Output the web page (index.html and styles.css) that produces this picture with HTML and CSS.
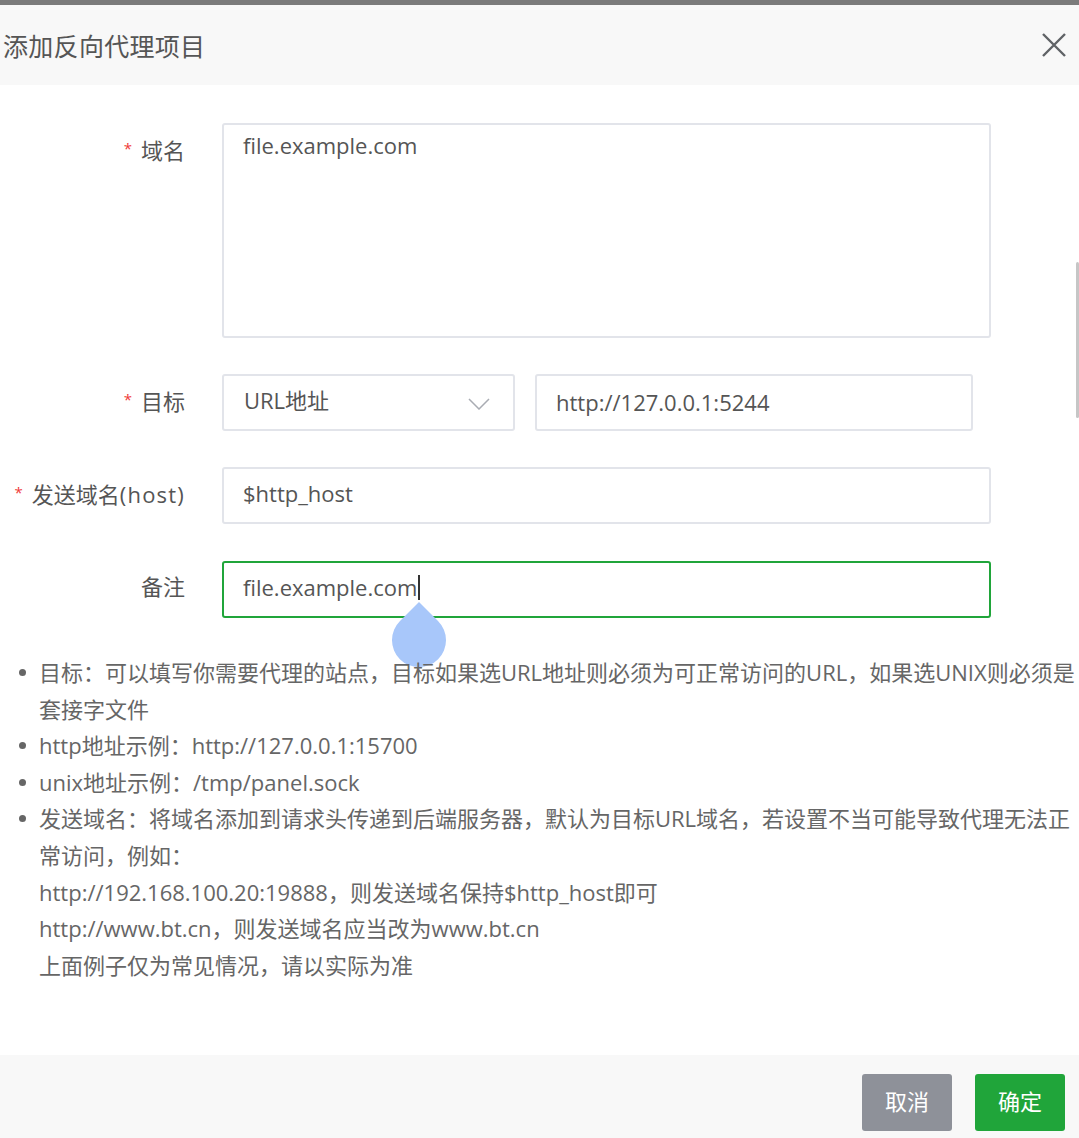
FILE: index.html
```html
<!DOCTYPE html>
<html lang="zh-CN">
<head>
<meta charset="utf-8">
<title>添加反向代理项目</title>
<link rel="stylesheet" href="styles.css">
</head>
<body>
<div class="page">
  <div class="topbar"></div>
  <header class="head">
    <h1 class="title">添加反向代理项目</h1>
    <button class="close" type="button" aria-label="关闭">
      <svg width="26" height="26" viewBox="0 0 26 26"><path d="M2 2 L24 24 M24 2 L2 24" stroke="#5f6266" stroke-width="2.4" fill="none" stroke-linecap="butt"/></svg>
    </button>
  </header>
  <main class="content">
    <div class="form">
      <div class="row">
        <div class="lbl"><span class="req">*</span>域名</div>
        <div class="ctrl"><div class="textarea">file.example.com</div></div>
      </div>
      <div class="row">
        <div class="lbl"><span class="req">*</span>目标</div>
        <div class="ctrl split">
          <div class="select"><span>URL地址</span>
            <svg class="chev" width="22" height="12" viewBox="0 0 22 12"><path d="M1 1 L11 11 L21 1" stroke="#a9acb3" stroke-width="1.5" fill="none"/></svg>
          </div>
          <div class="input url">http://127.0.0.1:5244</div>
        </div>
      </div>
      <div class="row">
        <div class="lbl"><span class="req">*</span>发送域名<span class="host">(host)</span></div>
        <div class="ctrl"><div class="input">$http_host</div></div>
      </div>
      <div class="row">
        <div class="lbl">备注</div>
        <div class="ctrl"><div class="input focus"><span class="val">file.example.com<span class="caret"></span><svg class="handle" width="56" height="68" viewBox="0 0 56 68"><path d="M28 0 L47 19 A27 27 0 1 1 9 19 Z" fill="#a8c7fa"/></svg></span></div></div>
      </div>
    </div>
    <ul class="notes">
      <li>目标：可以填写你需要代理的站点，目标如果选URL地址则必须为可正常访问的URL，如果选UNIX则必须是套接字文件</li>
      <li>http地址示例：http://127.0.0.1:15700</li>
      <li>unix地址示例：/tmp/panel.sock</li>
      <li>发送域名：将域名添加到请求头传递到后端服务器，默认为目标URL域名，若设置不当可能导致代理无法正常访问，例如：<br>http://192.168.100.20:19888，则发送域名保持$http_host即可<br>http://www.bt.cn，则发送域名应当改为www.bt.cn<br>上面例子仅为常见情况，请以实际为准</li>
    </ul>
  </main>
  <footer class="foot">
    <button class="btn cancel" type="button">取消</button>
    <button class="btn ok" type="button">确定</button>
  </footer>
  <div class="scrollbar"></div>
</div>
</body>
</html>
```

FILE: styles.css
```css
*, *::before, *::after {
  box-sizing: border-box;
}
html, body {
  margin: 0;
  padding: 0;
  background: #ffffff;
}
body {
  font-family: "Open Sans", "Noto Sans CJK SC", sans-serif;
  color: #555;
}
.page {
  position: relative;
  width: 1079px;
  height: 1138px;
  display: flex;
  flex-direction: column;
  overflow: hidden;
}
.topbar {
  height: 5px;
  background: #7b7b7b;
  flex: none;
}
.head {
  height: 80px;
  flex: none;
  background: #f8f8f8;
  display: flex;
  align-items: center;
  justify-content: space-between;
  padding: 0 12px 0 3px;
}
.title {
  margin: 0;
  font-size: 25px;
  font-weight: 400;
  color: #555;
  letter-spacing: 0.3px;
}
.close {
  border: 0;
  background: transparent;
  padding: 0;
  width: 26px;
  height: 26px;
  display: flex;
}
.content {
  flex: 1;
  padding-top: 38px;
}
.form {
  padding-right: 88px;
}
.row {
  display: flex;
  gap: 37px;
  margin-bottom: 36px;
}
.row:nth-child(3) {
  margin-bottom: 37px;
}
.lbl {
  width: 185px;
  flex: none;
  text-align: right;
  font-size: 22px;
  line-height: 50px;
  color: #555;
  white-space: nowrap;
}
.host {
  letter-spacing: 1.2px;
}
.req {
  color: #ef3a3a;
  font-size: 15px;
  vertical-align: 5px;
  margin-right: 9px;
}
.ctrl {
  flex: 1;
}
.split {
  display: flex;
  gap: 20px;
}
.textarea {
  height: 215px;
  border: 2px solid #e2e4ea;
  border-radius: 3px;
  padding: 6px 19px;
  font-size: 22px;
  line-height: 28px;
  color: #555;
}
.input, .select {
  height: 57px;
  border: 2px solid #e2e4ea;
  border-radius: 3px;
  padding: 0 19px;
  font-size: 22px;
  line-height: 49px;
  color: #555;
}
.select {
  width: 293px;
  flex: none;
  display: flex;
  align-items: center;
  justify-content: space-between;
  padding: 0 23px 4px 20px;
}
.chev {
  display: block;
  margin-top: 6px;
}
.url {
  width: 438px;
  flex: none;
  line-height: 53px;
}
.focus {
  border-color: #20a53a;
}
.val {
  position: relative;
  display: inline-block;
}
.caret {
  position: absolute;
  right: -3px;
  top: 12px;
  width: 2px;
  height: 25px;
  background: #333;
}
.handle {
  position: absolute;
  right: -30px;
  top: 39px;
}
.notes {
  list-style: none;
  margin: 3px 0 0;
  padding: 0 0 0 39px;
  font-size: 22px;
  line-height: 36.6px;
  color: #666;
}
.notes li {
  position: relative;
}
.notes li::before {
  content: "";
  position: absolute;
  left: -20px;
  top: 15px;
  width: 7px;
  height: 7px;
  border-radius: 50%;
  background: #666;
}
.foot {
  height: 83px;
  flex: none;
  background: #f8f8f8;
  display: flex;
  justify-content: flex-end;
  align-items: flex-start;
  gap: 23px;
  padding: 19px 14px 0 0;
}
.btn {
  width: 90px;
  height: 57px;
  border: 0;
  border-radius: 3px;
  color: #fff;
  font-family: "Open Sans", "Noto Sans CJK SC", sans-serif;
  font-size: 22px;
  line-height: 26px;
  padding: 0 0 4px;
}
.cancel {
  background: #8e9199;
}
.ok {
  background: #20a53a;
}
.scrollbar {
  position: absolute;
  right: 0;
  top: 262px;
  width: 3px;
  height: 156px;
  border-radius: 2px;
  background: #c6c6c6;
}
```
